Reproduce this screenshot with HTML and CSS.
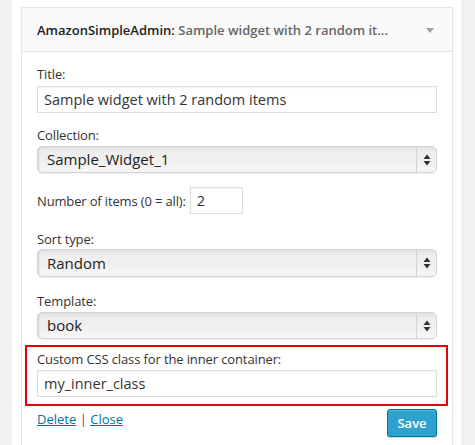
FILE: index.html
```html
<!DOCTYPE html>
<html>
<head>
<meta charset="utf-8">
<link rel="stylesheet" href="styles.css">
</head>
<body>
<div class="column">
  <div class="widget">
    <div class="widget-top">
      <h4 class="widget-title">AmazonSimpleAdmin:<span class="in-title"> Sample widget with 2 random it...</span></h4>
      <span class="toggle"></span>
    </div>
    <div class="inside">
      <div class="field">
        <label class="lbl">Title:</label>
        <div class="text-input">Sample widget with 2 random items</div>
      </div>
      <div class="field">
        <label class="lbl">Collection:</label>
        <div class="select"><span class="sel-val">Sample_Widget_1</span><span class="sel-btn"><svg width="8" height="12" viewBox="0 0 8 12"><path d="M4 0.5L7.5 5H0.5Z M4 11.5L7.5 7H0.5Z" fill="#333"/></svg></span></div>
      </div>
      <div class="field row">
        <label class="lbl inline">Number of items (0 = all):</label>
        <div class="text-input small">2</div>
      </div>
      <div class="field sort">
        <label class="lbl">Sort type:</label>
        <div class="select tall"><span class="sel-val">Random</span><span class="sel-btn"><svg width="8" height="12" viewBox="0 0 8 12"><path d="M4 0.5L7.5 5H0.5Z M4 11.5L7.5 7H0.5Z" fill="#333"/></svg></span></div>
      </div>
      <div class="field tmpl">
        <label class="lbl">Template:</label>
        <div class="select"><span class="sel-val">book</span><span class="sel-btn"><svg width="8" height="12" viewBox="0 0 8 12"><path d="M4 0.5L7.5 5H0.5Z M4 11.5L7.5 7H0.5Z" fill="#333"/></svg></span></div>
      </div>
      <div class="highlight">
        <label class="lbl">Custom CSS class for the inner container:</label>
        <div class="text-input">my_inner_class</div>
      </div>
      <div class="controls">
        <div class="links"><a href="#">Delete</a> <span class="sep">|</span> <a href="#">Close</a></div>
        <button class="save">Save</button>
      </div>
    </div>
  </div>
</div>
</body>
</html>
```

FILE: styles.css
```css
html, body {
  margin: 0;
  padding: 0;
}
body {
  background: #f1f1f1;
  font-family: "Open Sans", "Liberation Sans", sans-serif;
  font-size: 13px;
  color: #444;
}
.column {
  margin-left: 12px;
  width: 449px;
  min-height: 445px;
  box-sizing: border-box;
  background: #fff;
  padding: 7px 8px 0 9px;
}
.widget {
  width: 432px;
  box-sizing: border-box;
  border: 1px solid #e5e5e5;
  border-bottom: none;
  min-height: 438px;
  background: #fff;
}
.widget-top {
  height: 43px;
  background: #fafafa;
  border-bottom: 1px solid #e5e5e5;
  display: flex;
  align-items: center;
  justify-content: space-between;
  padding: 0 18px 0 15px;
}
.widget-title {
  margin: 0;
  font-size: 13px;
  line-height: 18px;
  font-weight: 600;
  color: #222;
  white-space: nowrap;
}
.in-title {
  color: #666;
}
.toggle {
  width: 0;
  height: 0;
  border-left: 4px solid transparent;
  border-right: 4px solid transparent;
  border-top: 5px solid #a0a0a0;
  margin-top: 1px;
}
.inside {
  padding: 13px 15px 0 15px;
}
.field {
  margin-bottom: 13px;
}
.lbl {
  display: block;
  line-height: 18px;
  color: #333;
  letter-spacing: -0.12px;
}
.text-input {
  box-sizing: border-box;
  height: 27px;
  border: 1px solid #ddd;
  box-shadow: inset 0 1px 2px rgba(0,0,0,0.04);
  padding: 0 6px;
  font-size: 14.5px;
  line-height: 25px;
  color: #333;
  margin-top: 3px;
}
.select {
  margin-top: 2px;
  box-sizing: border-box;
  height: 27px;
  border: 1px solid #d4d4d4;
  border-radius: 5px;
  background: linear-gradient(to bottom, #e2e2e2 0%, #eeeeee 20%, #f0f0f0 60%, #f6f6f6 100%);
  box-shadow: inset 2px 0 2px -1px rgba(0,0,0,0.12), 0 1px 1px rgba(0,0,0,0.06);
  display: flex;
  align-items: center;
  font-size: 15px;
  color: #222;
}
.select.tall {
  height: 28px;
  margin-top: 1px;
}
.sel-val {
  flex: 1;
  padding-left: 9px;
  line-height: 25px;
}
.sel-btn {
  width: 19px;
  height: 100%;
  border-left: 1px solid #d4d4d4;
  display: flex;
  align-items: center;
  justify-content: center;
}
.sel-btn svg {
  display: block;
}
.row {
  display: flex;
  align-items: center;
  margin-top: 14px;
  margin-bottom: 16px;
}
.lbl.inline {
  display: inline;
  margin-right: 4px;
  letter-spacing: -0.15px;
}
.text-input.small {
  width: 53px;
  margin-top: 0;
  padding: 0 6px;
}
.sort {
  margin-bottom: 15px;
}
.tmpl {
  margin-bottom: 6px;
}
.highlight {
  margin: 0 -11px 0 -12px;
  border: 2px solid #e8000b;
  padding: 3px 9px 7px 10px;
}
.highlight .text-input {
  margin-top: 2px;
}
.controls {
  display: flex;
  justify-content: space-between;
  align-items: flex-start;
  margin-top: 3px;
}
.links {
  line-height: 18px;
  margin-top: 1px;
}
.links a {
  color: #0074a2;
  text-decoration: underline;
}
.sep {
  color: #555;
}
.save {
  width: 50px;
  height: 28px;
  box-sizing: border-box;
  background: #2ea2cc;
  border: 1px solid #0074a2;
  border-radius: 3px;
  box-shadow: inset 0 1px 0 rgba(120,200,230,0.5), 0 1px 0 rgba(0,0,0,0.15);
  color: #fff;
  font-family: "Open Sans", "Liberation Sans", sans-serif;
  font-size: 13px;
  font-weight: 600;
  padding: 0;
  line-height: 26px;
}
```
